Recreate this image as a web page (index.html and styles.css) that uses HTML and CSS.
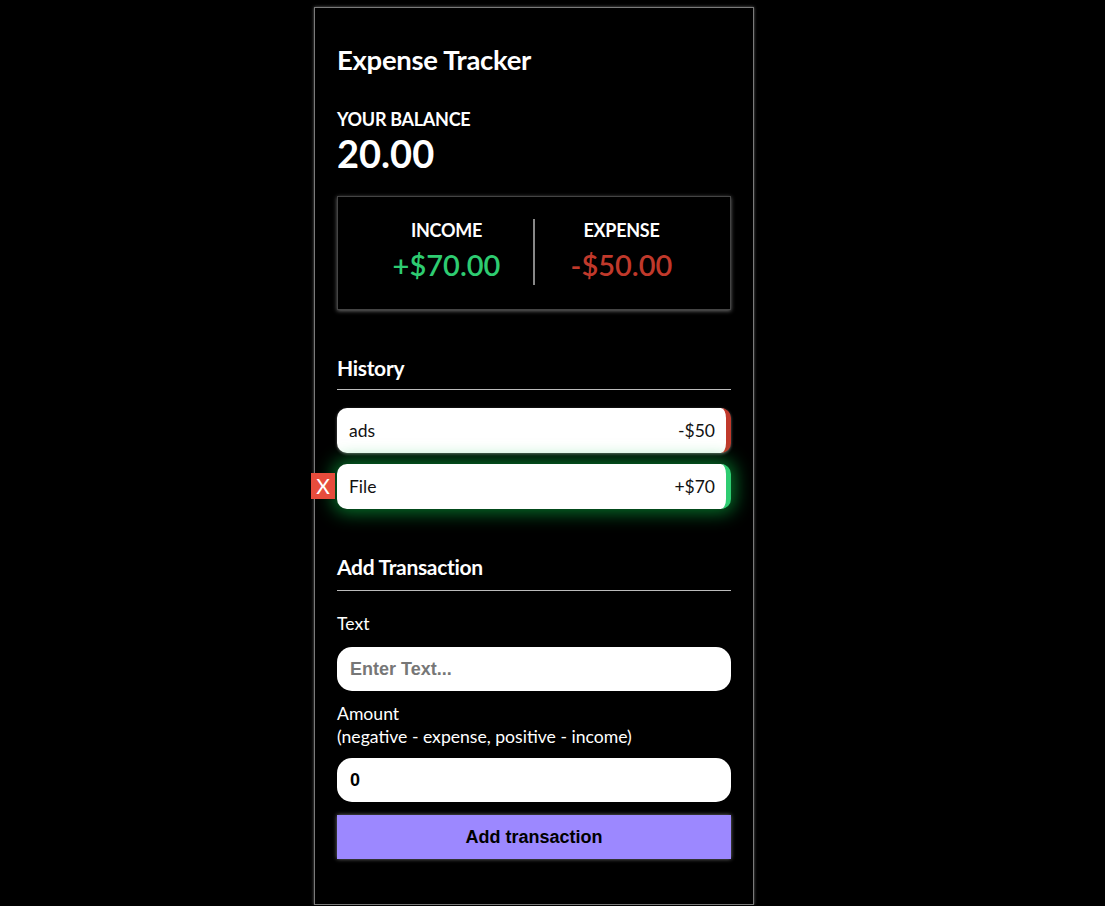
FILE: index.html
```html
<!DOCTYPE html>
<html lang="en">
<head>
    <meta charset="UTF-8" />
    <meta name="viewport" content="width=device-width, initial-scale=1.0" />
    <title>Expense Tracker</title>
    <link rel="stylesheet" href="styles.css">
</head>
<body>
    <div class="container">
        <h2 class="title">Expense Tracker</h2>

        <!-- Balance -->
        <h4 class="balance-label">Your Balance</h4>
        <h1 class="balance">20.00</h1>

        <!-- Income / Expense -->
        <div class="inc-exp-container">
            <div class="inc-exp-col divider">
                <h4>Income</h4>
                <p class="money plus">+$70.00</p>
            </div>
            <div class="inc-exp-col">
                <h4>Expense</h4>
                <p class="money minus">-$50.00</p>
            </div>
        </div>

        <!-- History -->
        <h3 class="section-title">History</h3>
        <ul class="list">
            <li class="minus">ads <span>-$50</span></li>
            <li class="plus active">File <span>+$70</span><button class="delete-btn">X</button></li>
        </ul>

        <!-- Add Transaction -->
        <h3 class="section-title add-title">Add Transaction</h3>
        <form>
            <div class="form-control">
                <label for="text">Text</label>
                <input type="text" id="text" placeholder="Enter Text...">
            </div>
            <div class="form-control">
                <label for="amount">Amount <br>(negative - expense, positive - income)</label>
                <input type="number" id="amount" value="0">
            </div>
            <button type="button" class="btn">Add transaction</button>
        </form>
    </div>
</body>
</html>
```

FILE: styles.css
```css
body {
    background-color: #000;
    color: #fff;
    margin: 0;
    font-family: Lato, "Open Sans", sans-serif;
}

.container {
    width: 394px;
    margin: 7px 0 0 314px;
    padding: 0 22px 45px;
    border: 1px solid #7a7a7a;
    box-shadow: 0 0 3px rgba(200, 200, 200, 0.5);
}

.title {
    margin: 36px 0 0;
    font-size: 27.5px;
    line-height: 32px;
    font-weight: 700;
    letter-spacing: -0.3px;
}

.balance-label {
    margin: 32px 0 0;
    font-size: 18px;
    line-height: 22px;
    text-transform: uppercase;
    letter-spacing: -0.3px;
}

.balance {
    margin: 3px 0 0;
    font-size: 38px;
    line-height: 40px;
    font-weight: 700;
}

/* Income / expense box */
.inc-exp-container {
    display: flex;
    margin-top: 23px;
    padding: 22px 22px 24px;
    border: 1px solid #444;
    box-shadow: 0 1px 4px rgba(200, 200, 200, 0.55);
}

.inc-exp-col {
    flex: 1;
    text-align: center;
    padding-bottom: 4px;
}

.inc-exp-col.divider {
    border-right: 2px solid #888;
}

.inc-exp-col h4 {
    margin: 0;
    font-size: 18px;
    line-height: 22px;
    text-transform: uppercase;
    letter-spacing: -0.3px;
}

.money {
    margin: 8px 0 0;
    font-size: 29px;
    line-height: 32px;
    font-weight: 600;
}

.money.plus {
    color: #2ecc71;
}

.money.minus {
    color: #c0392b;
}

/* Section headings */
.section-title {
    margin: 45px 0 0;
    padding-bottom: 9px;
    border-bottom: 1px solid #bbb;
    font-size: 21px;
    line-height: 25px;
    letter-spacing: -0.3px;
}

.add-title {
    padding-bottom: 11px;
}

/* History list */
.list {
    list-style-type: none;
    padding: 0;
    margin: 18px 0 0;
}

.list li {
    position: relative;
    display: flex;
    justify-content: space-between;
    align-items: center;
    height: 45px;
    box-sizing: border-box;
    padding: 0 11px 0 12px;
    margin-bottom: 11px;
    background-color: #fff;
    color: #111;
    font-size: 17.5px;
    border-radius: 10px;
    box-shadow: 0 1px 3px rgba(255, 255, 255, 0.4);
}

.list li.plus {
    border-right: 5px solid #2ecc71;
}

.list li.minus {
    border-right: 5px solid #c0392b;
}

.list li.active {
    box-shadow: 0 0 18px 4px rgba(10, 190, 70, 0.6);
}

.delete-btn {
    position: absolute;
    left: -26px;
    top: 9px;
    width: 24px;
    height: 26px;
    padding: 0;
    border: 0;
    background-color: #e74c3c;
    color: #fff;
    font-family: Lato, sans-serif;
    font-size: 21px;
    line-height: 26px;
}

/* Form */
.form-control label {
    display: block;
    margin-top: 23px;
    font-size: 17.6px;
    line-height: 20px;
}

.form-control + .form-control label {
    margin-top: 11px;
    line-height: 23px;
}

.form-control input {
    display: block;
    width: 100%;
    box-sizing: border-box;
    height: 44px;
    margin-top: 13px;
    padding: 0 13px;
    border: none;
    border-radius: 15px;
    font-family: "Liberation Sans", Arial, sans-serif;
    font-size: 18px;
    font-weight: bold;
    color: #000;
    outline: none;
}

.form-control + .form-control input {
    margin-top: 10px;
}

.form-control input::placeholder {
    color: #777;
}

input::-webkit-outer-spin-button,
input::-webkit-inner-spin-button {
    -webkit-appearance: none;
    margin: 0;
}

.btn {
    display: block;
    width: 100%;
    height: 44px;
    margin-top: 13px;
    border: none;
    background-color: #9c88ff;
    color: #000;
    font-family: "Liberation Sans", Arial, sans-serif;
    font-size: 18px;
    font-weight: bold;
    box-shadow: 0 0 4px rgba(200, 200, 200, 0.6);
    cursor: pointer;
}
```
